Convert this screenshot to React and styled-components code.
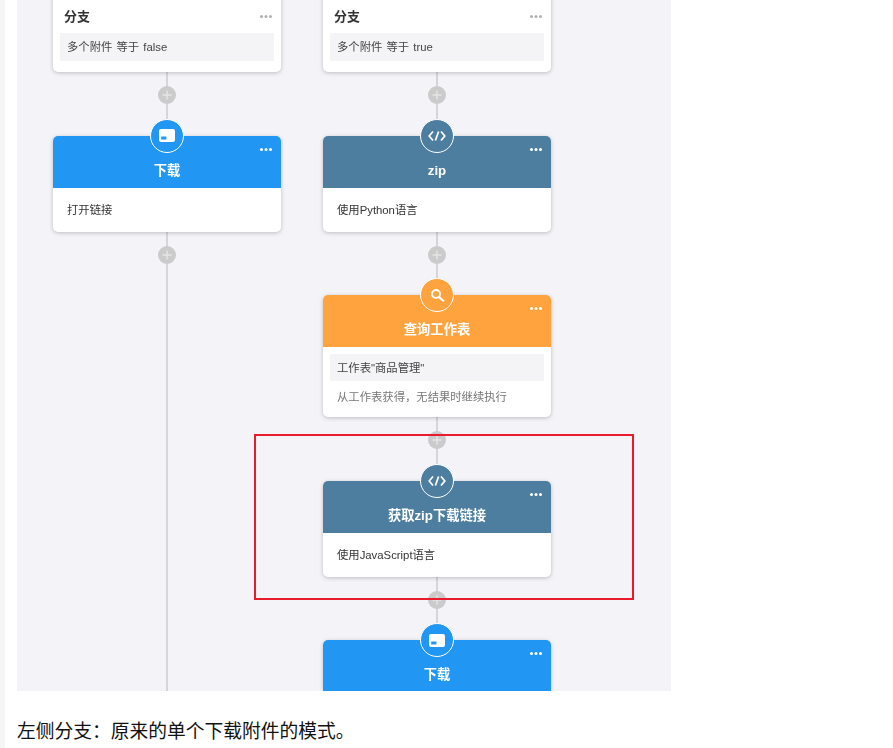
import React from "react";
import styled, { createGlobalStyle } from "styled-components";

const GlobalStyle = createGlobalStyle`
  html, body {
    margin: 0;
    padding: 0;
    height: 748px;
    overflow: hidden;
    background: #fff;
    font-family: "Liberation Sans", "Noto Sans CJK SC", sans-serif;
  }
`;

const HEAD_COLORS = {
  blue: "#2196f3",
  steel: "#4d7ea0",
  orange: "#ffa33f",
};

const DownloadIcon = () => (
  <svg width="16" height="13" viewBox="0 0 16 13">
    <rect x="0" y="0" width="16" height="13" rx="2" fill="#fff" />
    <rect x="2.2" y="7.5" width="5.2" height="3" fill="#2196f3" />
  </svg>
);

const CodeIcon = () => (
  <svg width="18" height="12" viewBox="0 0 18 12" fill="none" stroke="#fff" strokeWidth="1.7">
    <path d="M5 1.5 1.2 6 5 10.5" />
    <path d="M13 1.5 16.8 6 13 10.5" />
    <path d="M10.6 1.5 7.4 10.5" />
  </svg>
);

const SearchIcon = () => (
  <svg width="15" height="15" viewBox="0 0 15 15" fill="none" stroke="#fff" strokeWidth="1.9">
    <circle cx="6" cy="6" r="4" />
    <path d="M9 9 14 13.5" strokeWidth="2.2" />
  </svg>
);

const PlusIcon = () => (
  <svg width="10" height="10" viewBox="0 0 10 10" stroke="#e6e6e6" strokeWidth="1.4">
    <path d="M5 0.5v9M0.5 5h9" />
  </svg>
);

const Link = ({ grow }) => (
  <Connector $grow={grow}>
    <PlusButton>
      <PlusIcon />
    </PlusButton>
  </Connector>
);

const BranchCard = ({ condition }) => (
  <Card>
    <Dots $color="#b0b0b0" $top={25} />
    <BranchTitle>分支</BranchTitle>
    <Condition $height={28}>{condition}</Condition>
  </Card>
);

const ActionCard = ({ color, icon, title, condition, children }) => (
  <Card>
    <Badge $color={HEAD_COLORS[color]}>{icon}</Badge>
    <Dots $color="#fff" $top={12} />
    <CardHead $color={HEAD_COLORS[color]}>{title}</CardHead>
    {condition && (
      <CardBody $withCondition>
        <Condition $height={27}>{condition}</Condition>
        <Note>{children}</Note>
      </CardBody>
    )}
    {!condition && children && <CardBody>{children}</CardBody>}
  </Card>
);

export default function App() {
  return (
    <>
      <GlobalStyle />
      <Page>
        <SideStrip />
        <Main>
          <Shot>
            <Canvas>
              <Column>
                <BranchCard condition="多个附件 等于 false" />
                <Link />
                <ActionCard color="blue" icon={<DownloadIcon />} title="下载">
                  打开链接
                </ActionCard>
                <Link grow />
              </Column>
              <Column>
                <BranchCard condition="多个附件 等于 true" />
                <Link />
                <ActionCard color="steel" icon={<CodeIcon />} title="zip">
                  使用Python语言
                </ActionCard>
                <Link />
                <ActionCard
                  color="orange"
                  icon={<SearchIcon />}
                  title="查询工作表"
                  condition={'工作表"商品管理"'}
                >
                  从工作表获得，无结果时继续执行
                </ActionCard>
                <Link />
                <ActionCard color="steel" icon={<CodeIcon />} title="获取zip下载链接">
                  使用JavaScript语言
                </ActionCard>
                <Link />
                <ActionCard color="blue" icon={<DownloadIcon />} title="下载" />
              </Column>
            </Canvas>
            <Highlight />
          </Shot>
          <Caption>左侧分支：原来的单个下载附件的模式。</Caption>
        </Main>
      </Page>
    </>
  );
}

const Page = styled.div`
  display: flex;
  width: 893px;
  height: 748px;
  overflow: hidden;
`;

const SideStrip = styled.div`
  width: 5px;
  flex-shrink: 0;
  background: #f5f5f5;
`;

const Main = styled.div`
  padding-left: 12px;
`;

const Shot = styled.div`
  position: relative;
  width: 654px;
  height: 691px;
`;

const Canvas = styled.div`
  display: flex;
  gap: 42px;
  height: 691px;
  padding-left: 36px;
  box-sizing: border-box;
  background: #f3f3f8;
  overflow: hidden;
  filter: blur(0.5px);
`;

const Column = styled.div`
  display: flex;
  flex-direction: column;
  width: 228px;
  margin-top: -10px;
  font-family: "Liberation Sans", "Noto Sans CJK SC", sans-serif;
`;

const Connector = styled.div`
  display: flex;
  justify-content: center;
  align-items: flex-start;
  flex: ${(p) => (p.$grow ? "1 0 64px" : "0 0 63.5px")};
  padding-top: 14px;
  box-sizing: border-box;
  background: linear-gradient(#d6d6d6, #d6d6d6) center / 2px 100% no-repeat;
`;

const PlusButton = styled.div`
  display: flex;
  align-items: center;
  justify-content: center;
  width: 18px;
  height: 18px;
  border-radius: 50%;
  background: #cbcbcb;
`;

const Card = styled.div`
  position: relative;
  flex-shrink: 0;
  background: #fff;
  border-radius: 5px;
  box-shadow: 0 1px 4px rgba(0, 0, 0, 0.22);
`;

const Badge = styled.div`
  position: absolute;
  top: -17px;
  left: 50%;
  z-index: 1;
  display: flex;
  align-items: center;
  justify-content: center;
  width: 34px;
  height: 34px;
  margin-left: -17px;
  box-sizing: border-box;
  border: 1.5px solid #fff;
  border-radius: 50%;
  background: ${(p) => p.$color};
`;

const Dots = styled.div`
  position: absolute;
  top: ${(p) => p.$top}px;
  right: 9px;
  width: 3px;
  height: 3px;
  border-radius: 50%;
  background: ${(p) => p.$color};
  box-shadow: -4.5px 0 0 ${(p) => p.$color}, -9px 0 0 ${(p) => p.$color};
`;

const BranchTitle = styled.div`
  padding: 17px 11px 6px;
  line-height: 20px;
  font-size: 13px;
  font-weight: 700;
  color: #333;
`;

const Condition = styled.div`
  display: flex;
  align-items: center;
  height: ${(p) => p.$height}px;
  margin: 0 7px 11px;
  padding: 0 7px 2px;
  box-sizing: border-box;
  background: #f4f4f6;
  font-size: 11.33px;
  word-spacing: 1px;
  color: #444;
`;

const CardHead = styled.div`
  height: 52px;
  padding-top: 25px;
  box-sizing: border-box;
  border-radius: 5px 5px 0 0;
  background: ${(p) => p.$color};
  text-align: center;
  font-size: 13.3px;
  font-weight: 700;
  line-height: 20px;
  color: #fff;
`;

const CardBody = styled.div`
  display: flex;
  flex-direction: column;
  justify-content: center;
  height: ${(p) => (p.$withCondition ? "auto" : "44px")};
  padding: ${(p) => (p.$withCondition ? "7px 0 0" : "0 14px 2px")};
  box-sizing: border-box;
  font-size: 11.33px;
  color: #333;
`;

const Note = styled.div`
  margin-top: -3px;
  padding: 0 14px 11px;
  line-height: 17px;
  font-size: 11.33px;
  color: #777;
`;

const Highlight = styled.div`
  position: absolute;
  left: 237px;
  top: 434px;
  width: 380px;
  height: 166px;
  box-sizing: border-box;
  border: 2px solid #e81c2c;
  z-index: 2;
`;

const Caption = styled.p`
  margin: 26px 0 0;
  font-family: "Noto Sans CJK SC", sans-serif;
  font-size: 18.75px;
  line-height: 26px;
  color: #111;
`;
